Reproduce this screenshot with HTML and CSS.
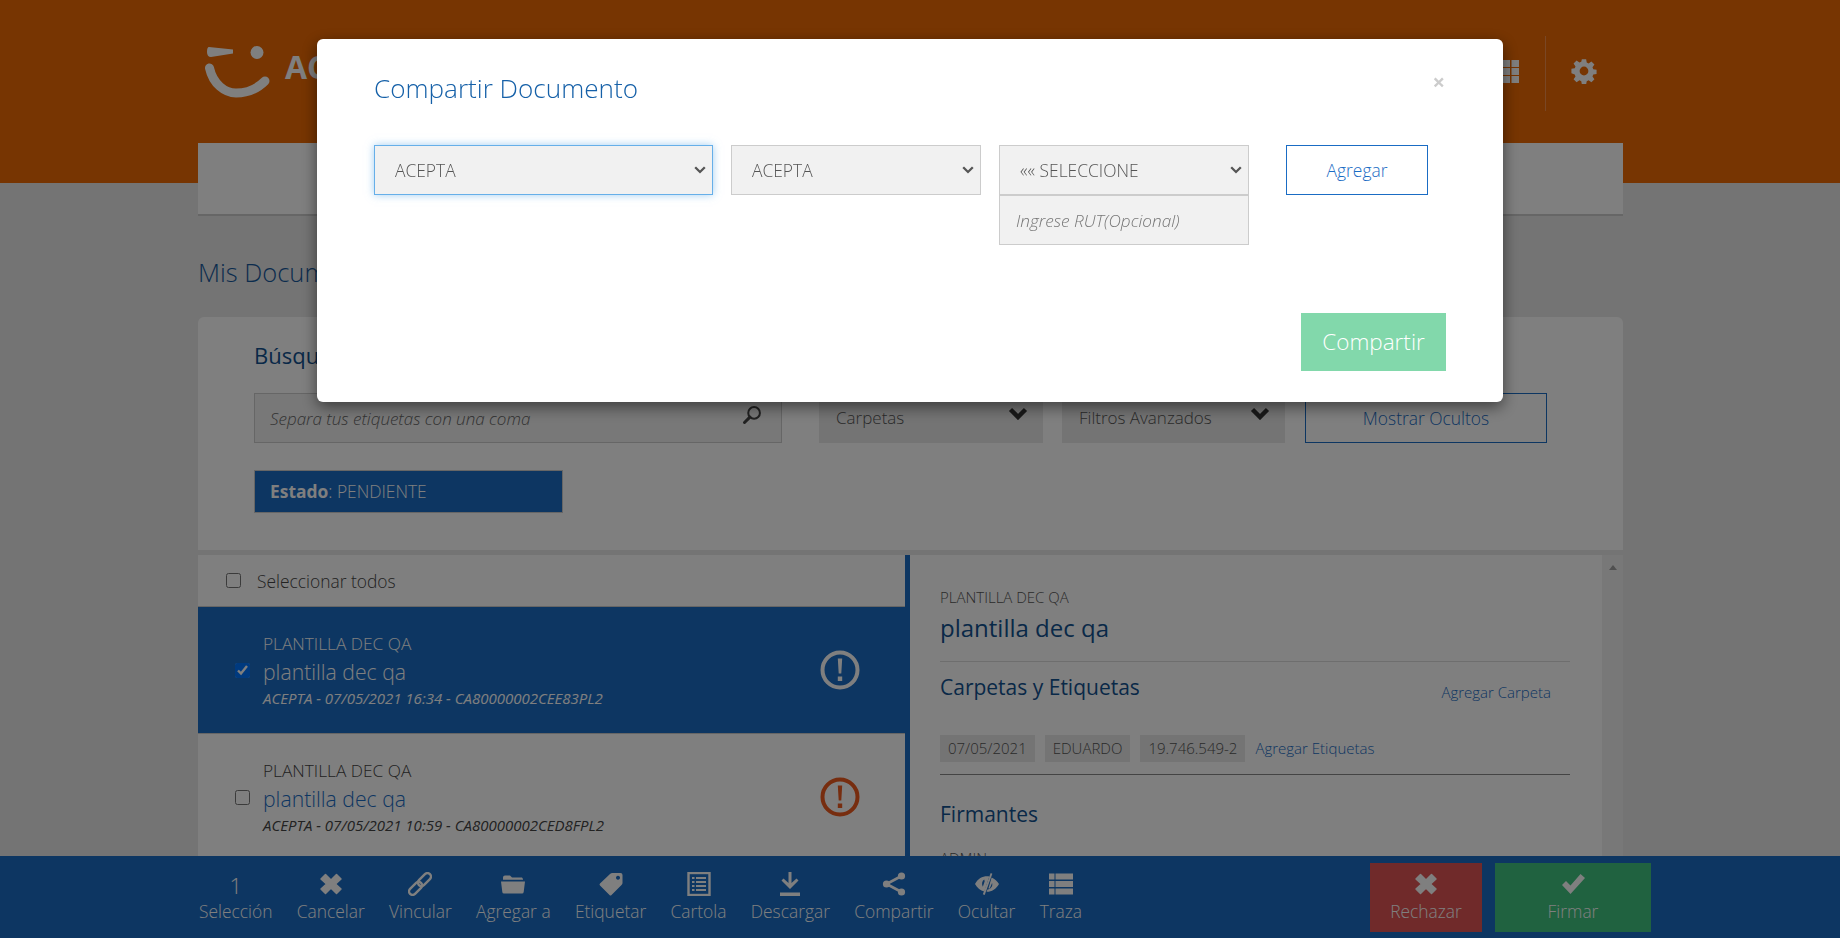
FILE: index.html
```html
<!DOCTYPE html>
<html>

<head>
    <title>Mis Documentos</title>
    <link rel="stylesheet" href="styles.css">
</head>

<body>
    <div class="page">
        <div class="content">
            <div class="top">
                <div class="logo">
                    <svg class="logo-mark" viewBox="0 0 66 52">
                        <path d="M4 1 L28 3.500 L28 7.500 L6 11 Q2 11 2 6 Q2 1 4 1Z" fill="#fff" />
                        <circle cx="52" cy="6.500" r="6.500" fill="#fff" />
                        <path d="M4.500 22 C8 38 20 47 31 47 C43 47 53 42 60 35" fill="none" stroke="#fff" stroke-width="9" stroke-linecap="round" />
                    </svg>
                    <span class="logo-text">ACEPTA</span>
                </div>
                <div class="top-icons">
                    <svg class="icon-th" viewBox="0 0 16 23" fill="#fff">
                        <rect x="0" y="0" width="7" height="7" />
                        <rect x="8.500" y="0" width="7.500" height="7" />
                        <rect x="0" y="8" width="7" height="7" />
                        <rect x="8.500" y="8" width="7.500" height="7" />
                        <rect x="0" y="16" width="7" height="7" />
                        <rect x="8.500" y="16" width="7.500" height="7" />
                    </svg>
                    <div class="top-divider"></div>
                    <svg class="icon-cog" viewBox="0 0 24 24" fill="#fff">
                        <path fill-rule="evenodd" d="M9.800 0h4.400l.6 3.400 1.900.8 2.900-2 3.100 3.100-2 2.900.8 1.900 3.400.6v4.400l-3.400.6-.8 1.900 2 2.900-3.100 3.100-2.900-2-1.900.8-.6 3.400H9.800l-.6-3.400-1.900-.8-2.900 2-3.100-3.100 2-2.900-.8-1.900L-.9 14.200V9.800l3.400-.6.8-1.900-2-2.900 3.100-3.100 2.900 2 1.900-.8zM12 7.500a4.500 4.500 0 1 0 0 9 4.500 4.500 0 0 0 0-9z" transform="translate(1.200 1.200) scale(.9)" />
                    </svg>
                </div>
            </div>

            <div class="nav"></div>

            <h1 class="page-title">Mis Documentos</h1>

            <div class="search-card">
                <h2 class="search-title">Búsqueda</h2>
                <div class="search-row">
                    <div class="search-input">
                        <span>Separa tus etiquetas con una coma</span>
                        <svg class="icon-search" viewBox="0 0 24 24">
                            <circle cx="14.500" cy="9.500" r="7" fill="none" stroke="#444" stroke-width="2.400" />
                            <path d="M9.500 14.500 L3 21" stroke="#444" stroke-width="3.600" stroke-linecap="round" />
                        </svg>
                    </div>
                    <div class="drop drop-carpetas">
                        <span>Carpetas</span>
                        <svg class="icon-chevron" viewBox="0 0 20 14">
                            <path d="M2.500 3.500 L10 11 L17.500 3.500" fill="none" stroke="#333" stroke-width="4.500" />
                        </svg>
                    </div>
                    <div class="drop drop-filtros">
                        <span>Filtros Avanzados</span>
                        <svg class="icon-chevron" viewBox="0 0 20 14">
                            <path d="M2.500 3.500 L10 11 L17.500 3.500" fill="none" stroke="#333" stroke-width="4.500" />
                        </svg>
                    </div>
                    <div class="btn-ocultos">Mostrar Ocultos</div>
                </div>
                <div class="estado-chip"><b>Estado</b>: PENDIENTE</div>
            </div>

            <div class="split">
                <div class="list">
                    <label class="select-all"><input type="checkbox"> Seleccionar todos</label>
                    <div class="doc-row doc-row-active">
                        <input type="checkbox" checked>
                        <div class="doc-text">
                            <div class="doc-type">PLANTILLA DEC QA</div>
                            <div class="doc-name">plantilla dec qa</div>
                            <div class="doc-meta">ACEPTA - 07/05/2021 16:34 - CA80000002CEE83PL2</div>
                        </div>
                        <svg class="icon-alert" viewBox="0 0 40 40">
                            <circle cx="20" cy="20" r="17.500" fill="none" stroke="currentColor" stroke-width="4" />
                            <path d="M17.800 8.500h4.400l-.9 15h-2.600z M17.800 26.500h4.400v4.500h-4.400z" fill="currentColor" />
                        </svg>
                    </div>
                    <div class="doc-row">
                        <input type="checkbox">
                        <div class="doc-text">
                            <div class="doc-type">PLANTILLA DEC QA</div>
                            <div class="doc-name">plantilla dec qa</div>
                            <div class="doc-meta">ACEPTA - 07/05/2021 10:59 - CA80000002CED8FPL2</div>
                        </div>
                        <svg class="icon-alert icon-alert-red" viewBox="0 0 40 40">
                            <circle cx="20" cy="20" r="17.500" fill="none" stroke="currentColor" stroke-width="4" />
                            <path d="M17.800 8.500h4.400l-.9 15h-2.600z M17.800 26.500h4.400v4.500h-4.400z" fill="currentColor" />
                        </svg>
                    </div>
                </div>
                <div class="detail">
                    <div class="detail-body">
                        <div class="detail-type">PLANTILLA DEC QA</div>
                        <div class="detail-name">plantilla dec qa</div>
                        <div class="detail-heading">
                            <h3>Carpetas y Etiquetas</h3>
                            <a class="detail-link">Agregar Carpeta</a>
                        </div>
                        <div class="tags">
                            <span class="tag tag-date">07/05/2021</span>
                            <span class="tag tag-name">EDUARDO</span>
                            <span class="tag tag-rut">19.746.549-2</span>
                            <a class="detail-link">Agregar Etiquetas</a>
                        </div>
                        <h3 class="firmantes">Firmantes</h3>
                        <div class="detail-type">ADMIN</div>
                    </div>
                    <div class="scrollbar"><div class="scroll-arrow"></div></div>
                </div>
            </div>
        </div>

        <div class="action-bar">
            <div class="action action-count"><span class="count">1</span>Selección</div>
            <div class="action">
                <svg class="bar-icon" viewBox="0 0 24 24" fill="#fff">
                    <path d="M6.500 2.500 L12 8 L17.500 2.500 L22 7 L16.500 12 L22 17 L17.500 21.500 L12 16 L6.500 21.500 L2 17 L7.500 12 L2 7Z" stroke="#fff" stroke-width="1.500" stroke-linejoin="round" />
                </svg>
                Cancelar
            </div>
            <div class="action">
                <svg class="bar-icon" viewBox="0 0 24 24" fill="none" stroke="#fff" stroke-width="2.400">
                    <g transform="rotate(-45 12 12)">
                        <rect x="-2" y="8.500" width="15.500" height="7" rx="3.500" />
                        <rect x="10.500" y="8.500" width="15.500" height="7" rx="3.500" />
                    </g>
                </svg>
                Vincular
            </div>
            <div class="action">
                <svg class="bar-icon" viewBox="0 0 24 24" fill="#fff">
                    <path d="M2 5.500 Q2 3.500 4 3.500 H9 L11 5.500 H21 L22 7 V7.800 H2Z" />
                    <path d="M0 9.500 H24 L22.700 20 Q22.500 21.500 21 21.500 H3 Q1.500 21.500 1.300 20Z" />
                </svg>
                Agregar a
            </div>
            <div class="action">
                <svg class="bar-icon" viewBox="0 0 24 24" fill="#fff">
                    <path fill-rule="evenodd" d="M13.500 1 H21.500 Q23.500 1 23.500 3 V11 Q23.500 12 22.500 13 L12.500 23 Q11.500 24 10.500 23 L1 13.500 Q0 12.500 1 11.500 L11 2 Q12 1 13.500 1Z M19 3.800 a2 2 0 1 0 .01 0Z" />
                </svg>
                Etiquetar
            </div>
            <div class="action">
                <svg class="bar-icon" viewBox="0 0 24 24" fill="none" stroke="#fff">
                    <rect x="1.500" y="1" width="21" height="22" stroke-width="2.400" />
                    <path d="M5 6h2.500M9 6h10M5 10h2.500M9 10h10M5 14h2.500M9 14h10M5 18h2.500M9 18h10" stroke-width="1.800" />
                </svg>
                Cartola
            </div>
            <div class="action">
                <svg class="bar-icon" viewBox="0 0 24 24" fill="#fff">
                    <path d="M10.500 0 H13.500 V11 L18.500 6.500 L20.500 8.500 L12 17 L3.500 8.500 L5.500 6.500 L10.500 11Z" />
                    <rect x="2" y="20.500" width="20" height="3.500" />
                </svg>
                Descargar
            </div>
            <div class="action">
                <svg class="bar-icon" viewBox="0 0 24 24" fill="#fff" stroke="#fff">
                    <path d="M19.500 4 L4.500 12 L19.500 20" fill="none" stroke-width="2.600" />
                    <circle cx="19.500" cy="4" r="3.600" stroke="none" />
                    <circle cx="4.500" cy="12" r="3.600" stroke="none" />
                    <circle cx="19.500" cy="20" r="3.600" stroke="none" />
                </svg>
                Compartir
            </div>
            <div class="action">
                <svg class="bar-icon" viewBox="0 0 26 24" fill="#fff">
                    <path fill-rule="evenodd" d="M0 12 C3 6 8 3.500 13 3.500 C14 3.500 15 3.600 15.500 3.800 L10 20 C6 19 2.500 16.500 0 12Z M10 7 C7.500 8.500 7 12 8.500 15 L10.500 9 Z" />
                    <path d="M18 5 C21.500 6.500 24 9 26 12 C23 17.500 18 20.500 13 20.500 L12.500 20.500 L13.500 18 C17.500 17.500 19.500 14 18.500 11 L16 17 L14.500 17 Z" />
                    <path d="M17 0 L18.800 .8 L10.500 24 L8.500 23.200Z" />
                </svg>
                Ocultar
            </div>
            <div class="action">
                <svg class="bar-icon" viewBox="0 0 24 24" fill="#fff">
                    <path d="M0 1.500h5.500v6H0zM6.500 1.500H24v6H6.500zM0 9h5.500v6H0zM6.500 9H24v6H6.500zM0 16.500h5.500v6H0zM6.500 16.500H24v6H6.500z" />
                </svg>
                Traza
            </div>
            <div class="bar-buttons">
                <div class="bar-button bar-button-reject">
                    <svg class="bar-icon" viewBox="0 0 24 24" fill="#fff">
                        <path d="M6.500 2.500 L12 8 L17.500 2.500 L22 7 L16.500 12 L22 17 L17.500 21.500 L12 16 L6.500 21.500 L2 17 L7.500 12 L2 7Z" stroke="#fff" stroke-width="1.500" stroke-linejoin="round" />
                    </svg>
                    Rechazar
                </div>
                <div class="bar-button bar-button-sign">
                    <svg class="bar-icon" viewBox="0 0 24 24" fill="#fff">
                        <path d="M1 13 L5 9 L9.500 13.500 L19.500 2 L24 6 L9.500 22Z" />
                    </svg>
                    Firmar
                </div>
            </div>
        </div>
    </div>

    <div class="overlay">
        <div class="modal">
            <div class="modal-head">
                <h2 class="modal-title">Compartir Documento</h2>
                <span class="modal-close">×</span>
            </div>
            <div class="share-row">
                <select class="share-select share-company share-focus">
                    <option>ACEPTA</option>
                </select>
                <select class="share-select share-area">
                    <option>ACEPTA</option>
                </select>
                <div class="share-user">
                    <select class="share-select">
                        <option>«« SELECCIONE</option>
                    </select>
                    <input class="share-rut" type="text" placeholder="Ingrese RUT(Opcional)">
                </div>
                <button class="btn-add">Agregar</button>
            </div>
            <div class="modal-foot">
                <button class="btn-share">Compartir</button>
            </div>
        </div>
    </div>
</body>

</html>
```

FILE: styles.css
```css
* {
    box-sizing: border-box;
}

html,
body {
    height: 100%;
}

body {
    margin: 0;
    padding: 0;
    overflow: hidden;
    font-family: "Open Sans", sans-serif;
    font-weight: 300;
    color: #444;
    background: linear-gradient(#ee6a04 183px, #e8e8e8 183px);
}

.page {
    height: 100%;
    display: flex;
    flex-direction: column;
}

.content {
    flex: 1;
    min-height: 0;
    overflow: hidden;
    width: 1425px;
    margin-left: 198px;
}

/* header */
.top {
    height: 143px;
    display: flex;
    justify-content: space-between;
}

.logo {
    display: flex;
    align-items: flex-start;
    padding: 46px 0 0 7px;
}

.logo-mark {
    width: 66px;
    height: 52px;
}

.logo-text {
    margin: 3px 0 0 14px;
    font-size: 32px;
    line-height: 36px;
    font-weight: 700;
    color: #fff;
}

.top-icons {
    display: flex;
    align-items: flex-start;
}

.icon-th {
    width: 16px;
    height: 23px;
    margin-top: 60px;
}

.top-divider {
    width: 1px;
    height: 75px;
    margin: 36px 25px 0 26px;
    background-color: #f58f4a;
}

.icon-cog {
    width: 26px;
    height: 26px;
    margin: 58px 26px 0 0;
}

.nav {
    height: 73px;
    background-color: #fff;
    border-bottom: 2px solid #ccc;
}

.page-title {
    margin: 0;
    padding-top: 40px;
    height: 101px;
    font-size: 25.500px;
    line-height: 32px;
    font-weight: 300;
    color: #17599c;
}

/* search */
.search-card {
    height: 233px;
    padding: 20px 56px 0;
    background-color: #fff;
    border-radius: 6px 6px 0 0;
}

.search-title {
    margin: 0;
    height: 56px;
    font-size: 22px;
    line-height: 36px;
    font-weight: 400;
    color: #135290;
}

.search-row {
    display: flex;
    height: 50px;
}

.search-input {
    width: 528px;
    margin-right: 37px;
    padding: 0 15px;
    display: flex;
    align-items: center;
    justify-content: space-between;
    background-color: #f1f1f1;
    border: 1px solid #ccc;
    font-size: 17px;
    font-style: italic;
    color: #666;
}

.icon-search {
    width: 20px;
    height: 20px;
    margin: -6px 4px 0 0;
}

.drop {
    display: flex;
    align-items: center;
    justify-content: space-between;
    padding: 0 17px;
    background-color: #e8e8e8;
    font-size: 17px;
    color: #555;
}

.drop span {
    margin-top: -2px;
}

.drop-carpetas {
    width: 224px;
    margin-right: 19px;
}

.drop-filtros {
    width: 223px;
    margin-right: 20px;
}

.icon-chevron {
    width: 20px;
    height: 14px;
    margin: -10px -2px 0 0;
}

.btn-ocultos {
    width: 242px;
    display: flex;
    align-items: center;
    justify-content: center;
    border: 1px solid #1a6cc4;
    font-size: 17.400px;
    color: #1a6cc4;
}

.estado-chip {
    width: 309px;
    height: 43px;
    margin-top: 27px;
    padding-left: 15px;
    line-height: 41px;
    background-color: #1a6cc4;
    border: 1px solid #ccc;
    color: #fff;
    font-size: 17.400px;
}

.estado-chip b {
    font-weight: 700;
}

/* document list */
.split {
    display: flex;
    margin-top: 5px;
}

.list {
    width: 707px;
    background-color: #fff;
}

.select-all {
    height: 52px;
    display: flex;
    align-items: center;
    padding-left: 28px;
    gap: 16px;
    font-size: 17.400px;
    border-bottom: 1px solid #ccc;
}

input[type="checkbox"] {
    width: 15px;
    height: 15px;
    margin: 0;
}

.doc-row {
    height: 127px;
    padding: 24px 0 0 37px;
    display: flex;
    align-items: flex-start;
    background-color: #fff;
    border-bottom: 1px solid #ccc;
}

.doc-row input {
    margin-top: 32px;
}

.doc-row-active {
    background-color: #1a6cc4;
    color: #fff;
}

.doc-text {
    width: 557px;
    margin-left: 13px;
}

.doc-type {
    font-size: 17.300px;
    line-height: 26px;
}

.doc-name {
    font-size: 21.200px;
    line-height: 30px;
    color: #1a6cc4;
}

.doc-row-active .doc-name {
    color: #fff;
}

.doc-meta {
    font-size: 15px;
    line-height: 22px;
    font-style: italic;
    font-weight: 400;
}

.icon-alert {
    width: 40px;
    height: 40px;
    margin: 19px 0 0 0;
}

.icon-alert-red {
    color: #ee5a1e;
}

/* document detail */
.detail {
    width: 718px;
    display: flex;
    background-color: #fff;
    border-left: 5px solid #1a6cc4;
}

.detail-body {
    width: 692px;
    padding: 30px 32px 0 30px;
}

.detail-type {
    font-size: 15px;
    line-height: 24px;
    color: #555;
}

.detail-name {
    height: 53px;
    padding-top: 4px;
    border-bottom: 1px solid #ddd;
    font-size: 24px;
    line-height: 30px;
    font-weight: 400;
    color: #135290;
}

.detail-heading {
    height: 73px;
    display: flex;
    justify-content: space-between;
    padding: 9px 19px 0 0;
}

.detail-heading h3,
.firmantes {
    margin: 0;
    font-size: 21px;
    line-height: 32px;
    font-weight: 400;
    color: #135290;
}

.detail-link {
    font-size: 15px;
    line-height: 42px;
    color: #1a6cc4;
}

.tags {
    height: 40px;
    display: flex;
    gap: 10px;
    border-bottom: 1px solid #888;
    align-items: flex-start;
}

.tags .detail-link {
    line-height: 27px;
}

.tag {
    height: 27px;
    padding: 0 8px;
    line-height: 27px;
    font-size: 15px;
    background-color: #e8e8e8;
    color: #555;
}

.firmantes {
    padding-top: 23px;
    height: 71px;
}

.scrollbar {
    width: 21px;
    display: flex;
    justify-content: center;
    padding-top: 10px;
    background-color: #f1f1f1;
}

.scroll-arrow {
    width: 0;
    height: 0;
    border-left: 4px solid transparent;
    border-right: 4px solid transparent;
    border-bottom: 5px solid #a0a0a0;
}

/* bottom bar */
.action-bar {
    height: 82px;
    flex-shrink: 0;
    display: flex;
    gap: 24.300px;
    padding: 16px 0 0 199px;
    background-color: #1a6cc4;
    color: #fff;
    font-size: 17.400px;
}

.action {
    display: flex;
    flex-direction: column;
    align-items: center;
    line-height: 24px;
}

.count {
    height: 27px;
    font-size: 22px;
    line-height: 27px;
}

.bar-icon {
    width: 24px;
    height: 24px;
    margin-bottom: 3px;
}

.bar-buttons {
    display: flex;
    gap: 13px;
    margin-left: auto;
    margin-right: 189px;
}

.bar-button {
    width: 112px;
    height: 69px;
    margin-top: -9px;
    padding-top: 9px;
    display: flex;
    flex-direction: column;
    align-items: center;
    line-height: 24px;
}

.bar-button-reject {
    background-color: #e05454;
}

.bar-button-sign {
    width: 156px;
    background-color: #40c480;
}

/* modal */
.overlay {
    position: fixed;
    top: 0;
    left: 0;
    width: 100%;
    height: 100%;
    background-color: rgba(0, 0, 0, 0.5);
    z-index: 99;
}

.modal {
    width: 1186px;
    height: 363px;
    margin: 39px 0 0 317px;
    padding: 0 57px;
    background-color: #fff;
    border-radius: 6px;
    box-shadow: 0 5px 15px rgba(0, 0, 0, 0.5);
}

.modal-head {
    height: 106px;
    display: flex;
    justify-content: space-between;
    padding-top: 32px;
}

.modal-title {
    margin: 0;
    font-size: 26.100px;
    line-height: 34px;
    font-weight: 300;
    color: #1560a8;
}

.modal-close {
    margin-right: 1px;
    font-size: 22px;
    line-height: 20px;
    font-weight: 700;
    color: #ccc;
}

.share-row {
    display: flex;
    align-items: flex-start;
}

.share-select {
    display: block;
    width: 100%;
    height: 50px;
    padding: 0 26px 0 20px;
    appearance: none;
    border: 1px solid #ccc;
    border-radius: 0;
    outline: none;
    background-color: #f1f1f1;
    background-image: url("data:image/svg+xml,%3Csvg xmlns='http://www.w3.org/2000/svg' viewBox='0 0 12 8'%3E%3Cpath d='M1.200 1.300 L6 6 L10.800 1.300' fill='none' stroke='%23555' stroke-width='2.300'/%3E%3C/svg%3E");
    background-repeat: no-repeat;
    background-position: right 6px center;
    background-size: 12px 8px;
    font-family: "Open Sans", sans-serif;
    font-size: 17.400px;
    font-weight: 300;
    color: #555;
}

.share-company {
    width: 339px;
    margin-right: 18px;
}

.share-focus {
    border-color: #66afe9;
    box-shadow: 0 0 8px rgba(102, 175, 233, 0.6);
}

.share-area {
    width: 250px;
    margin-right: 18px;
}

.share-user {
    width: 250px;
    margin-right: 37px;
}

.share-rut {
    display: block;
    width: 100%;
    height: 50px;
    padding: 0 16px;
    border: 1px solid #ccc;
    background-color: #f1f1f1;
    font-family: "Open Sans", sans-serif;
    font-size: 17.200px;
    font-weight: 300;
}

.share-rut::placeholder {
    font-style: italic;
    color: #777;
}

.btn-add {
    width: 142px;
    height: 50px;
    border: 1px solid #1a6cc4;
    background-color: #fff;
    font-family: "Open Sans", sans-serif;
    font-size: 17.400px;
    font-weight: 300;
    color: #1a6cc4;
}

.modal-foot {
    display: flex;
    justify-content: flex-end;
    margin-top: 68px;
}

.btn-share {
    width: 145px;
    height: 58px;
    padding-bottom: 2px;
    border: none;
    background-color: #82d8ab;
    font-family: "Open Sans", sans-serif;
    font-size: 22.500px;
    font-weight: 300;
    color: #fff;
}
```
